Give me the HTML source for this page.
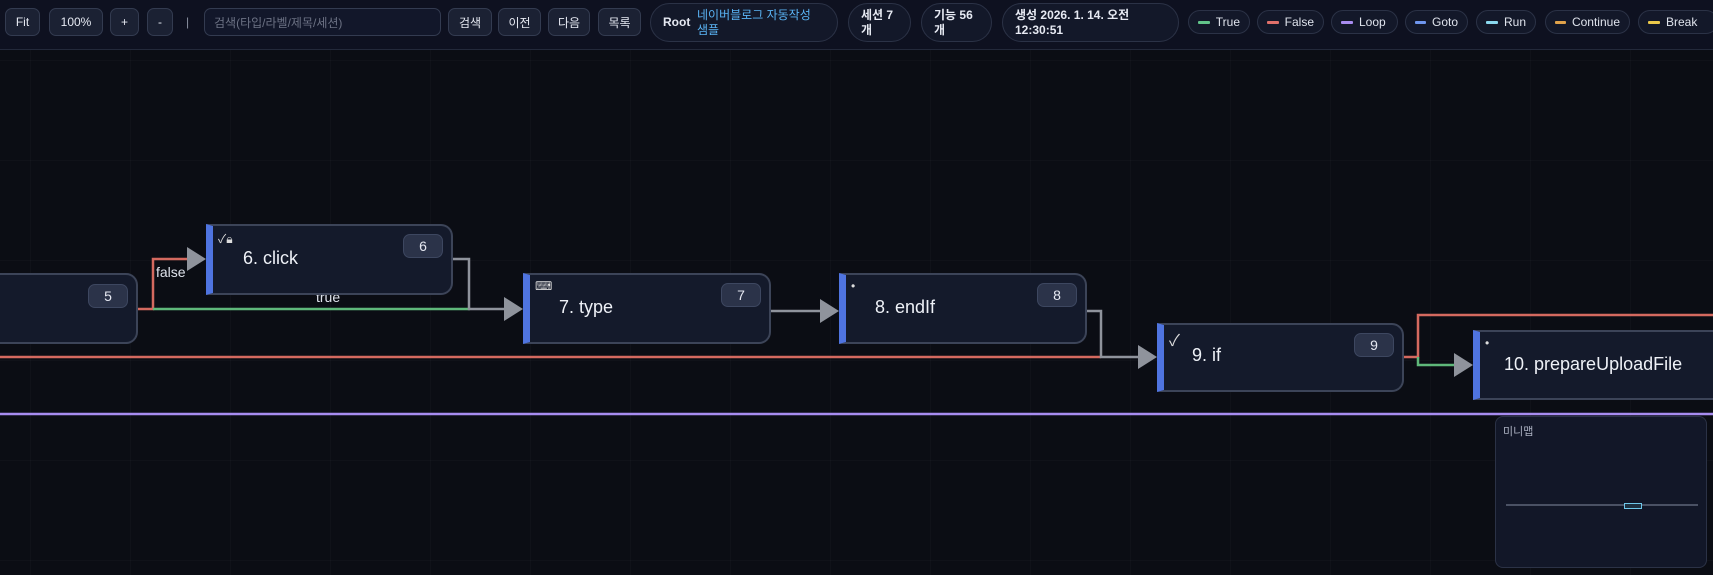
<!DOCTYPE html>
<html><head><meta charset="utf-8"><style>
*{box-sizing:border-box;margin:0;padding:0}
body{width:1713px;height:575px;overflow:hidden;background:#0b0d14;font-family:"Liberation Sans","Noto Sans CJK KR",sans-serif;color:#e6e9f2;position:relative}
.grid{position:absolute;left:0;top:50px;width:1713px;height:525px;background-image:linear-gradient(rgba(255,255,255,0.02) 1px,transparent 1px),linear-gradient(90deg,rgba(255,255,255,0.02) 1px,transparent 1px);background-size:100px 100px;background-position:30px 10px}
.bar{position:absolute;left:0;top:0;width:1713px;height:50px;background:#0e1120;border-bottom:1px solid #23293a}
.b{position:absolute;top:8px;height:28px;border:1px solid #333b50;background:#1b2133;border-radius:7px;font-size:12px;display:flex;align-items:center;justify-content:center;color:#e6e9f2}
.pill{position:absolute;top:3px;height:39px;border:1px solid #2b3246;background:#131829;border-radius:20px;font-size:12px;font-weight:bold;display:flex;align-items:center;padding:0 12px;line-height:15px}
.lg{position:absolute;top:10px;height:24px;border:1px solid #2b3246;background:#131829;border-radius:12px;font-size:12px;display:flex;align-items:center;padding:0 9px;color:#dfe3ec}
.lg i{display:inline-block;width:12px;height:3px;margin-right:6px;border-radius:1px}
.node{position:absolute;background:#141a2b;border:2px solid #3c4458;border-radius:0 12px 12px 0;border-left:7px solid #4f74e0}
.node .t{position:absolute;left:27px;font-size:18px;color:#eef1f7}
.node .n{position:absolute;right:8px;top:8px;width:40px;height:24px;background:#2b3349;border:1px solid #3d4760;border-radius:7px;font-size:14px;display:flex;align-items:center;justify-content:center}
.node .ic{position:absolute;left:5px;top:4px;font-size:12px;color:#ddd}
</style></head><body>
<div class="grid"></div>
<div class="bar">
<div class="b" style="left:5px;width:35px">Fit</div>
<div class="b" style="left:49px;width:54px">100%</div>
<div class="b" style="left:110px;width:29px">+</div>
<div class="b" style="left:147px;width:26px">-</div>
<div style="position:absolute;left:186px;top:15px;font-size:12px;color:#8a90a0">|</div>
<div class="b" style="left:204px;width:237px;justify-content:flex-start;padding-left:9px;color:#6c7284;background:#12172a">검색(타입/라벨/제목/세션)</div>
<div class="b" style="left:448px;width:44px">검색</div>
<div class="b" style="left:498px;width:43px">이전</div>
<div class="b" style="left:548px;width:42px">다음</div>
<div class="b" style="left:598px;width:43px">목록</div>
<div class="pill" style="left:650px;width:188px">Root&nbsp;&nbsp;<span style="color:#5ab4f5;font-weight:normal">네이버블로그 자동작성<br>샘플</span></div>
<div class="pill" style="left:848px;width:63px">세션 7<br>개</div>
<div class="pill" style="left:921px;width:71px">기능 56<br>개</div>
<div class="pill" style="left:1002px;width:177px">생성 2026. 1. 14. 오전<br>12:30:51</div>
<div class="lg" style="left:1188px;width:62px"><i style="background:#62c48a"></i>True</div>
<div class="lg" style="left:1257px;width:67px"><i style="background:#e0706a"></i>False</div>
<div class="lg" style="left:1331px;width:67px"><i style="background:#a88cf0"></i>Loop</div>
<div class="lg" style="left:1405px;width:63px"><i style="background:#6f96ee"></i>Goto</div>
<div class="lg" style="left:1476px;width:60px"><i style="background:#8ad8ee"></i>Run</div>
<div class="lg" style="left:1545px;width:85px"><i style="background:#e0a24a"></i>Continue</div>
<div class="lg" style="left:1638px;width:80px"><i style="background:#eac84a"></i>Break</div>
</div>
<svg style="position:absolute;left:0;top:0" width="1713" height="575">
<g fill="none" stroke-width="2.5">
<path d="M0 357 H1101" stroke="#d4695f"/>
<path d="M0 414 H1713" stroke="#a78cf0"/>
<path d="M138 309 H153 V259 H192" stroke="#d4695f"/>
<path d="M153 309 H470" stroke="#5fb87a"/>
<path d="M453 259 H469 V309 H510" stroke="#8f939c"/>
<path d="M771 311 H826" stroke="#8f939c"/>
<path d="M1087 311 H1101 V357 H1144" stroke="#8f939c"/>
<path d="M1404 357 H1418 V315 H1713" stroke="#d4695f"/>
<path d="M1418 357 V365 H1460" stroke="#5fb87a"/>
</g>
<g fill="#8f939c">
<path d="M187 247 L206 259 L187 271Z"/>
<path d="M504 297 L523 309 L504 321Z"/>
<path d="M820 299 L839 311 L820 323Z"/>
<path d="M1138 345 L1157 357 L1138 369Z"/>
<path d="M1454 353 L1473 365 L1454 377Z"/>
</g>
<text x="156" y="277" fill="#dfe3ec" font-size="14" font-family="Liberation Sans">false</text>
<text x="316" y="302" fill="#dfe3ec" font-size="14" font-family="Liberation Sans">true</text>
</svg>
<div class="node" style="left:-20px;top:273px;width:158px;height:71px"><div class="n" style="top:9px">5</div></div>
<div class="node" style="left:206px;top:224px;width:247px;height:71px"><span class="ic">✓🔒︎</span><div class="t" style="top:22px;left:30px">6. click</div><div class="n">6</div></div>
<div class="node" style="left:523px;top:273px;width:248px;height:71px"><span class="ic">⌨</span><div class="t" style="top:22px;left:29px">7. type</div><div class="n">7</div></div>
<div class="node" style="left:839px;top:273px;width:248px;height:71px"><span class="ic">•</span><div class="t" style="top:22px;left:29px">8. endIf</div><div class="n">8</div></div>
<div class="node" style="left:1157px;top:323px;width:247px;height:69px"><span class="ic" style="font-size:16px;top:2px">✓</span><div class="t" style="top:20px;left:28px">9. if</div><div class="n">9</div></div>
<div class="node" style="left:1473px;top:330px;width:260px;height:70px;border-radius:0"><span class="ic">•</span><div class="t" style="top:22px;left:24px">10. prepareUploadFile</div></div>
<div style="position:absolute;left:1495px;top:416px;width:212px;height:152px;background:#121728;border:1px solid #2b3246;border-radius:8px">
<div style="position:absolute;left:7px;top:6px;font-size:11px;color:#aab0c0">미니맵</div>
<div style="position:absolute;left:10px;top:87px;width:192px;height:2px;background:#4a5164"></div>
<div style="position:absolute;left:128px;top:86px;width:18px;height:6px;border:1px solid #6ec7ea;background:#1d3040"></div>
</div>
</body></html>
